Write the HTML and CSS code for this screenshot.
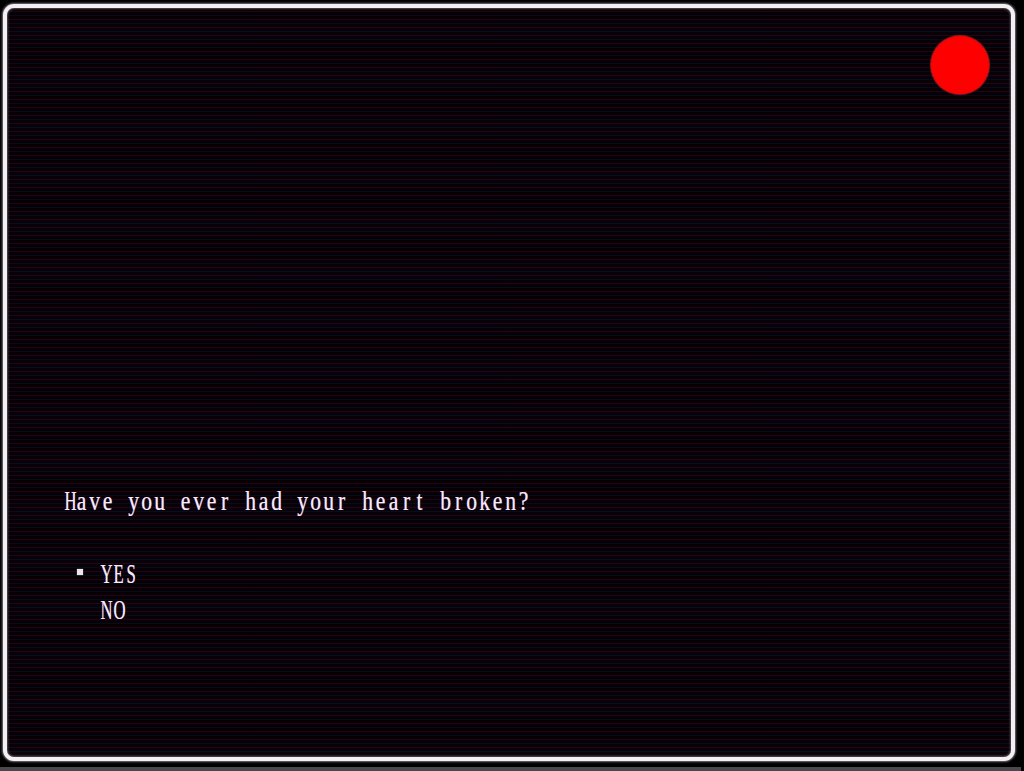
FILE: index.html
```html
<!DOCTYPE html>
<html lang="en">
<head>
<meta charset="utf-8">
<title>Question</title>
<link rel="stylesheet" href="styles.css">
</head>
<body>
<div class="screen">
  <div class="frame">
    <div class="top-row">
      <div class="rec-dot"></div>
    </div>
    <div class="dialog">
      <p class="question" aria-label="Have you ever had your heart broken?"><span class="c u">H</span><span class="c">a</span><span class="c">v</span><span class="c">e</span><span class="c">&nbsp;</span><span class="c">y</span><span class="c">o</span><span class="c">u</span><span class="c">&nbsp;</span><span class="c">e</span><span class="c">v</span><span class="c">e</span><span class="c">r</span><span class="c">&nbsp;</span><span class="c">h</span><span class="c">a</span><span class="c">d</span><span class="c">&nbsp;</span><span class="c">y</span><span class="c">o</span><span class="c">u</span><span class="c">r</span><span class="c">&nbsp;</span><span class="c">h</span><span class="c">e</span><span class="c">a</span><span class="c">r</span><span class="c">t</span><span class="c">&nbsp;</span><span class="c">b</span><span class="c">r</span><span class="c">o</span><span class="c">k</span><span class="c">e</span><span class="c">n</span><span class="c">?</span></p>
      <ul class="options">
        <li class="option selected"><span class="cursor"></span><span class="label"><span class="c u">Y</span><span class="c u">E</span><span class="c u">S</span></span></li>
        <li class="option"><span class="cursor"></span><span class="label"><span class="c u">N</span><span class="c u">O</span></span></li>
      </ul>
    </div>
  </div>
  <div class="bottom-strip"></div>
</div>
</body>
</html>
```
FILE: styles.css
```css
html, body {
  margin: 0;
  padding: 0;
  background: #000;
}
.screen {
  width: 1024px;
  height: 771px;
  padding: 4px 0 0 3px;
  box-sizing: border-box;
  display: flex;
  flex-direction: column;
  background: #000;
}
.frame {
  width: 1012px;
  height: 757px;
  box-sizing: border-box;
  border: 4px solid #f2f0f2;
  border-radius: 11px;
  box-shadow: 0 0 2px 1px rgba(150,140,150,0.8), inset 0 0 2px 1px rgba(120,110,120,0.7);
  display: flex;
  flex-direction: column;
  background-color: #050003;
  background-image:
    repeating-linear-gradient(to bottom,
      transparent 0px, transparent 3px,
      rgba(80, 6, 28, 0.45) 3px, rgba(80, 6, 28, 0.45) 4px,
      transparent 4px, transparent 7px,
      rgba(20, 24, 70, 0.35) 7px, rgba(20, 24, 70, 0.35) 8px),
    repeating-linear-gradient(to bottom,
      rgba(10, 10, 30, 0.0) 0px, rgba(14, 16, 44, 0.15) 24px, rgba(10, 10, 30, 0.0) 48px);
}
.top-row {
  display: flex;
  justify-content: flex-end;
  padding: 28px 22px 0 0;
}
.rec-dot {
  width: 58px;
  height: 58px;
  border-radius: 50%;
  background: #ff0000;
  box-shadow: 0 0 1px 1px rgba(255, 40, 40, 0.6);
}
.dialog {
  margin-top: auto;
  padding: 0 0 129px 55px;
  font-family: "Liberation Serif", "Times New Roman", serif;
  font-size: 27px;
  line-height: 36px;
  color: #f3eef8;
  text-shadow: -0.6px 0 0 rgba(255, 90, 140, 0.45), 0.6px 0 0 rgba(120, 140, 255, 0.45);
}
.c {
  display: inline-block;
  width: 13px;
  text-align: center;
  transform: scaleX(0.8);
}
.c.u {
  transform: scaleX(0.62);
}
.question {
  margin: 0 0 37px 0;
  white-space: nowrap;
}
.options {
  list-style: none;
  margin: 0;
  padding: 0 0 0 15px;
}
.option {
  display: flex;
  align-items: center;
  height: 36px;
}
.label {
  white-space: nowrap;
}
.cursor {
  width: 6px;
  height: 6px;
  margin: 0 15px 4px 0;
  background: transparent;
}
.option.selected .cursor {
  background: #e8e6ea;
  box-shadow: 0 0 1px rgba(200, 200, 220, 0.8);
}
.bottom-strip {
  margin-top: 6px;
  height: 4px;
  width: 1021px;
  margin-left: -3px;
  background: #4a484c;
}
```
